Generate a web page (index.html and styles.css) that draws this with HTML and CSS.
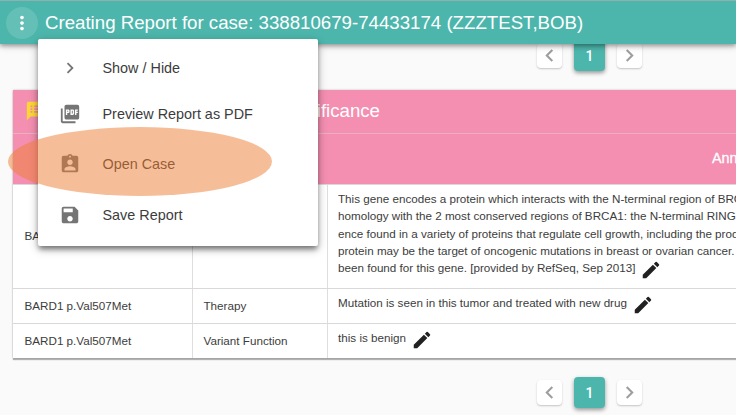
FILE: index.html
```html
<!DOCTYPE html>
<html lang="en">
<head>
<meta charset="utf-8">
<title>Creating Report</title>
<link rel="stylesheet" href="styles.css">
</head>
<body>
<svg class="defs" aria-hidden="true">
  <symbol id="pencil" viewBox="0 0 24 24"><path d="M3 17.25V21h3.75L17.81 9.94l-3.75-3.75L3 17.25zM20.71 7.04a1 1 0 0 0 0-1.41l-2.34-2.34a1 1 0 0 0-1.41 0l-1.83 1.83 3.75 3.75 1.83-1.83z"/></symbol>
  <symbol id="right" viewBox="0 0 24 24"><path d="M8.59 16.59L13.17 12 8.59 7.41 10 6l6 6-6 6z"/></symbol>
  <symbol id="left" viewBox="0 0 24 24"><path d="M15.41 16.59L10.83 12l4.58-4.59L14 6l-6 6 6 6z"/></symbol>
</svg>
<header class="bar">
  <button class="more"><svg viewBox="0 0 24 24"><path d="M12 8c1.1 0 2-.9 2-2s-.9-2-2-2-2 .9-2 2 .9 2 2 2zm0 2c-1.1 0-2 .9-2 2s.9 2 2 2 2-.9 2-2-.9-2-2-2zm0 6c-1.1 0-2 .9-2 2s.9 2 2 2 2-.9 2-2-.9-2-2-2z"/></svg></button>
  <h1>Creating Report for case: 338810679-74433174 (ZZZTEST,BOB)</h1>
</header>
<main>
  <nav class="pager top">
    <button class="step"><svg><use href="#left"/></svg></button>
    <button class="page">1</button>
    <button class="step"><svg><use href="#right"/></svg></button>
  </nav>
  <section class="card">
    <div class="card-title">
      <svg viewBox="0 0 24 24"><path d="M20 2H4c-1.1 0-1.99.9-1.99 2L2 22l4-4h14c1.1 0 2-.9 2-2V4c0-1.1-.9-2-2-2zM8 14H6v-2h2v2zm0-3H6V9h2v2zm0-3H6V6h2v2zm7 6h-5v-2h5v2zm3-3h-8V9h8v2zm0-3h-8V6h8v2z"/></svg>
      <h2>Clinical Significance</h2>
    </div>
    <div class="row head"><div></div><div></div><div>Annotation</div></div>
    <div class="row tall">
      <div>BARD1</div><div></div>
      <div class="note"><p>This gene encodes a protein which interacts with the N-terminal region of BRCA1.<br>homology with the 2 most conserved regions of BRCA1: the N-terminal RING motif<br>ence found in a variety of proteins that regulate cell growth, including the products<br>protein may be the target of oncogenic mutations in breast or ovarian cancer.<br>been found for this gene. [provided by RefSeq, Sep 2013]<svg class="edit"><use href="#pencil"/></svg></p></div>
    </div>
    <div class="row">
      <div>BARD1 p.Val507Met</div><div>Therapy</div>
      <div class="note"><p>Mutation is seen in this tumor and treated with new drug<svg class="edit"><use href="#pencil"/></svg></p></div>
    </div>
    <div class="row">
      <div>BARD1 p.Val507Met</div><div>Variant Function</div>
      <div class="note"><p>this is benign<svg class="edit"><use href="#pencil"/></svg></p></div>
    </div>
  </section>
  <nav class="pager">
    <button class="step"><svg><use href="#left"/></svg></button>
    <button class="page">1</button>
    <button class="step"><svg><use href="#right"/></svg></button>
  </nav>
</main>
<ul class="menu">
  <li><svg><use href="#right"/></svg>Show / Hide</li>
  <li><svg viewBox="0 0 24 24"><path d="M20 2H8c-1.1 0-2 .9-2 2v12c0 1.1.9 2 2 2h12c1.1 0 2-.9 2-2V4c0-1.1-.9-2-2-2zm-8.5 7.5c0 .83-.67 1.5-1.5 1.5H9v2H7.5V7H10c.83 0 1.5.67 1.5 1.5v1zm5 2c0 .83-.67 1.5-1.5 1.5h-2.5V7H15c.83 0 1.5.67 1.5 1.5v3zm4-3H19v1h1.5V11H19v2h-1.5V7h3v1.5zM9 9.5h1v-1H9v1zM4 6H2v14c0 1.1.9 2 2 2h14v-2H4V6zm10 5.5h1v-3h-1v3z"/></svg>Preview Report as PDF</li>
  <li><svg viewBox="0 0 24 24"><path d="M19 3h-4.18C14.4 1.84 13.3 1 12 1c-1.3 0-2.4.84-2.82 2H5c-1.1 0-2 .9-2 2v14c0 1.1.9 2 2 2h14c1.1 0 2-.9 2-2V5c0-1.1-.9-2-2-2zm-7 0c.55 0 1 .45 1 1s-.45 1-1 1-1-.45-1-1 .45-1 1-1zm0 4c1.66 0 3 1.34 3 3s-1.34 3-3 3-3-1.34-3-3 1.34-3 3-3zm6 12H6v-1.4c0-2 4-3.1 6-3.1s6 1.1 6 3.1V19z"/></svg>Open Case</li>
  <li><svg viewBox="0 0 24 24"><path d="M17 3H5c-1.11 0-2 .9-2 2v14c0 1.1.89 2 2 2h14c1.1 0 2-.9 2-2V7l-4-4zm-5 16c-1.66 0-3-1.34-3-3s1.34-3 3-3 3 1.34 3 3-1.34 3-3 3zm3-10H5V5h10v4z"/></svg>Save Report</li>
</ul>
<div class="highlight"></div>
</body>
</html>
```
FILE: styles.css
```css
* { box-sizing: border-box; }
body {
  margin: 0;
  height: 415px;
  overflow: hidden;
  position: relative;
  background: #fafafa;
  color: #3c3c3c;
  font-family: "Liberation Sans", Arial, sans-serif;
  font-size: 11.66px;
}
main { overflow: hidden; height: 371px; }
.defs { position: absolute; width: 0; height: 0; }
svg { fill: currentColor; flex: none; }
button { border: 0; padding: 0; font: inherit; display: flex; align-items: center; justify-content: center; }
h1, h2, p, ul { margin: 0; padding: 0; }
h1, h2 { font-weight: 400; font-size: 18.66px; color: #fff; white-space: nowrap; }

.bar {
  position: relative;
  z-index: 1;
  height: 44px;
  display: flex;
  align-items: center;
  gap: 7px;
  padding-left: 6px;
  background: #4db6ac;
  border-top: 1px solid #8fb0ad;
  box-shadow: 0 2px 4px rgba(0, 0, 0, .3), 0 3px 7px rgba(0, 0, 0, .14);
}
.more { width: 32px; height: 32px; border-radius: 50%; background: rgba(255, 255, 255, .13); color: #fff; }
.more svg { width: 22px; height: 22px; }

.pager { display: flex; align-items: center; gap: 12px; width: 107px; height: 31px; margin: 19px 0 0 537px; }
.pager.top { margin-top: -4px; }
.step { width: 25px; height: 25px; border-radius: 4px; background: #fff; color: #9e9e9e; box-shadow: 0 1px 2px rgba(0, 0, 0, .22); }
.step svg { width: 25px; height: 25px; }
.page { width: 31px; height: 31px; border-radius: 4px; background: #4db6ac; color: #fff; font: 500 14px Roboto, sans-serif; box-shadow: 0 2px 4px rgba(0, 0, 0, .4); }

.card { width: 1150px; margin: 19px 0 0 13px; background: #fff; box-shadow: 0 2px 1px rgba(0, 0, 0, .28), 0 0 2px rgba(0, 0, 0, .25); }
.card-title { height: 43px; display: flex; align-items: center; padding: 0 0 1px 12px; background: #f48fb1; color: #fdd835; }
.card-title svg { width: 22px; height: 22px; }
.card-title h2 { width: 333px; text-align: right; }
.row { display: grid; grid-template-columns: 179px 135px 1fr; height: 35px; border-top: 1px solid #d9d9d9; }
.row > div { display: flex; align-items: center; padding: 0 0 2px 10.5px; border-left: 1px solid #dedede; white-space: nowrap; }
.row > div:first-child { border-left: 0; padding-left: 11.5px; }
.row > .note { padding: 0 0 5px 10px; }
.row.head { height: 51px; background: #f48fb1; color: #fff; font-size: 14.4px; border-color: #e5b3c4; }
.row.head > div { border: 0; }
.row.head > div:last-child { padding-left: 385px; -webkit-text-stroke: .3px; }
.row.tall { height: 104px; }
.row.tall > .note { padding-bottom: 5px; }
.note p { line-height: 17.3px; }
.edit { width: 22px; height: 22px; margin: -3px 0 -3px 5px; vertical-align: -5.5px; color: #212121; }

.menu {
  position: absolute;
  z-index: 2;
  left: 38px;
  top: 39px;
  width: 279.5px;
  height: 207px;
  padding: 5px 0 6px;
  display: grid;
  grid-template-rows: 47px 46px 53px 49px;
  list-style: none;
  background: #fff;
  border-radius: 2px;
  font-size: 14.4px;
  box-shadow: 0 4px 5px -1px rgba(0, 0, 0, .4), 0 3px 10px rgba(0, 0, 0, .3);
}
.menu li { display: flex; align-items: center; gap: 21.5px; padding-left: 21px; }
.menu svg { width: 22px; height: 22px; color: #757575; }

.highlight { position: absolute; z-index: 3; left: 8px; top: 127px; width: 264px; height: 69px; border-radius: 50%; background: rgba(237, 125, 49, .5); }
```
